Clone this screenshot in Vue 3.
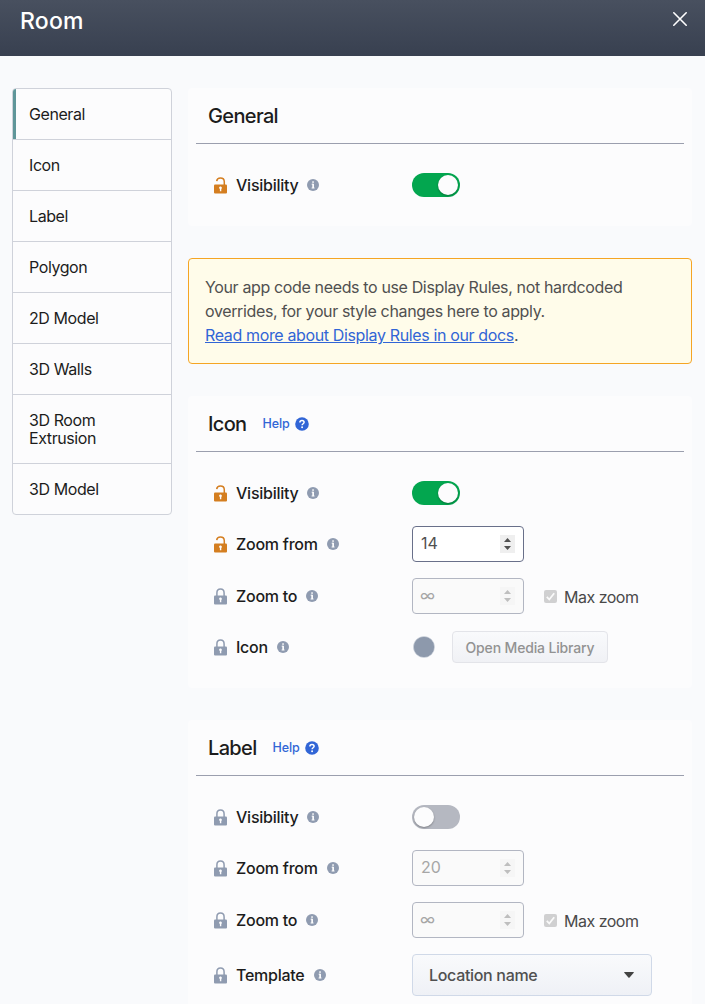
<script setup>
const navItems = ['General', 'Icon', 'Label', 'Polygon', '2D Model', '3D Walls', '3D Room Extrusion', '3D Model']

const general = {
  title: 'General',
  rows: [{ label: 'Visibility', open: true, type: 'toggle', on: true }],
}

const sections = [
  {
    title: 'Icon',
    rows: [
      { label: 'Visibility', open: true, type: 'toggle', on: true },
      { label: 'Zoom from', open: true, type: 'number', value: '14' },
      { label: 'Zoom to', type: 'number', value: '∞', disabled: true, max: true },
      { label: 'Icon', type: 'media' },
    ],
  },
  {
    title: 'Label',
    rows: [
      { label: 'Visibility', type: 'toggle', on: false },
      { label: 'Zoom from', type: 'number', value: '20', disabled: true },
      { label: 'Zoom to', type: 'number', value: '∞', disabled: true, max: true },
      { label: 'Template', type: 'select', value: 'Location name' },
    ],
  },
]

const blocks = [general, { alert: true }, ...sections]
</script>

<template>
  <div class="page">
    <header class="topbar">
      <h1>Room</h1>
      <svg class="close" width="16" height="16" viewBox="0 0 16 16">
        <path d="M1.8 1.8 14.2 14.2M14.2 1.8 1.8 14.2" stroke="#fff" stroke-width="1.6" stroke-linecap="round" />
      </svg>
    </header>

    <div class="layout">
      <nav class="nav">
        <a v-for="(item, i) in navItems" :key="item" :class="['nav-item', { active: i === 0 }]"><span>{{ item }}</span></a>
      </nav>

      <main class="content">
        <template v-for="(block, i) in blocks" :key="i">
          <div v-if="block.alert" class="alert">
            <div>Your app code needs to use Display Rules, not hardcoded</div>
            <div>overrides, for your style changes here to apply.</div>
            <div><a>Read more about Display Rules in our docs</a>.</div>
          </div>

          <section v-else class="card">
            <div class="card-head">
              <h2>{{ block.title }}</h2>
              <a v-if="i > 0" class="help">
                <span>Help</span>
                <svg width="14" height="14" viewBox="0 0 14 14">
                  <circle cx="7" cy="7" r="6.8" fill="#3165d6" />
                  <path d="M4.9 5.5C4.9 4.2 5.8 3.5 7 3.5s2.1.7 2.1 1.8c0 1.5-2 1.4-2 3" fill="none" stroke="#fff" stroke-width="1.5" />
                  <circle cx="7.1" cy="10.3" r=".95" fill="#fff" />
                </svg>
              </a>
            </div>

            <div class="rows">
              <div v-for="row in block.rows" :key="row.label" class="row">
                <div class="label">
                  <svg :class="['lock', { open: row.open }]" width="14" height="18" viewBox="0 0 14 18">
                    <path v-if="row.open" d="M2.7 5.2C3 3.2 4.5 2.1 6.4 2.1c2.3 0 3.9 1.5 3.9 3.7V10" fill="none" stroke="currentColor" stroke-width="1.5" />
                    <path v-else d="M2.9 10V6c0-2.3 1.5-3.9 3.6-3.9s3.6 1.6 3.6 3.9v4" fill="none" stroke="currentColor" stroke-width="1.5" />
                    <rect y="8.6" width="13" height="9" rx="1.1" fill="currentColor" />
                    <path d="M5.1 12a1.4 1.4 0 1 1 2.2 1v2.3H5.9V13a1.4 1.4 0 0 1-.8-1z" fill="#fcfcfd" />
                  </svg>
                  <span class="label-text">{{ row.label }}</span>
                  <svg class="info" width="12" height="12" viewBox="0 0 12 12">
                    <circle cx="6" cy="6" r="6" fill="#8f9bb0" />
                    <rect x="5.2" y="2.3" width="1.7" height="1.5" rx=".4" fill="#fff" />
                    <path d="M4.7 5.2h1.4v3.6M4.6 9h2.9" fill="none" stroke="#fff" stroke-width="1" />
                    <path d="M6.2 4.8V9" stroke="#fff" stroke-width="1.4" />
                  </svg>
                </div>

                <div v-if="row.type === 'toggle'" :class="['toggle', { on: row.on }]"><i></i></div>

                <template v-else-if="row.type === 'number'">
                  <div :class="['number', { disabled: row.disabled }]">
                    <span :class="{ inf: row.value === '∞' }">{{ row.value }}</span>
                    <svg class="spin" width="15" height="18" viewBox="0 0 15 18">
                      <rect width="15" height="18" fill="#efefef" />
                      <path d="M4 7 7.5 3 11 7zM4 11 7.5 15 11 11z" fill="#505050" />
                    </svg>
                  </div>
                  <div v-if="row.max" class="max">
                    <svg width="13" height="13" viewBox="0 0 13 13">
                      <rect width="13" height="13" rx="2" fill="#d0d0d1" />
                      <path d="m2.8 6.9 2.5 2.6 4.9-6.3" fill="none" stroke="#fafafa" stroke-width="1.8" />
                    </svg>
                    <span>Max zoom</span>
                  </div>
                </template>

                <template v-else-if="row.type === 'media'">
                  <svg class="dot" width="22" height="22" viewBox="0 0 22 22">
                    <circle cx="11" cy="11" r="10.6" fill="#8d99ac" stroke="#d5dae2" stroke-width=".6" />
                  </svg>
                  <button class="media" disabled>Open Media Library</button>
                </template>

                <div v-else class="select">
                  <span>{{ row.value }}</span>
                  <svg width="10" height="6" viewBox="0 0 10 6"><path d="M.7 0h8.6q.9 0 .4.7L5.6 5.5q-.6.7-1.2 0L.3.7Q-.2 0 .7 0z" fill="#434343" /></svg>
                </div>
              </div>
            </div>
          </section>
        </template>
      </main>
    </div>
  </div>
</template>

<style>
body {
  margin: 0;
  overflow: hidden;
}
</style>

<style scoped>
.page {
  height: 1004px;
  overflow: hidden;
  background: #f9fafc;
  color: #1c1c1c;
  font-family: Inter, "Liberation Sans", sans-serif;
  font-size: 16px;
}
.topbar {
  box-sizing: border-box;
  height: 56px;
  padding: 6px 17px 0 20px;
  display: flex;
  justify-content: space-between;
  background: linear-gradient(#48505f, #384050);
}
h1 {
  margin: 0;
  font-size: 23px;
  line-height: 30px;
  font-weight: 500;
  letter-spacing: 0.2px;
  color: #fff;
}
.close {
  margin-top: 5px;
}
.layout {
  display: flex;
  align-items: flex-start;
  gap: 16px;
  padding: 32px 13px 0 12px;
}
.nav {
  box-sizing: border-box;
  width: 160px;
  flex: none;
  border: 1px solid #cfd2da;
  border-radius: 4px;
  overflow: hidden;
  background: #fcfcfd;
}
.nav-item {
  display: block;
  padding: 16px;
  line-height: 18px;
  letter-spacing: -0.42px;
}
.nav-item + .nav-item {
  border-top: 1px solid #cfd2da;
}
.nav-item span {
  display: block;
  width: 90px;
}
.nav-item.active {
  box-shadow: inset 3px 0 #5f9699;
}
.content {
  width: 504px;
  display: flex;
  flex-direction: column;
  gap: 32px;
}
.card {
  border-radius: 4px;
  background: #fcfcfd;
}
.card-head {
  box-sizing: border-box;
  height: 56px;
  margin: 0 8px;
  padding: 0 12px;
  display: flex;
  align-items: center;
  gap: 16px;
  border-bottom: 1px solid #9b9fae;
}
h2 {
  margin: 1px 0 0;
  font-size: 20px;
  line-height: 24px;
  font-weight: 500;
  letter-spacing: -0.65px;
}
.help {
  display: flex;
  align-items: center;
  gap: 5px;
  color: #3165d6;
  font-size: 12.5px;
  font-weight: 500;
  letter-spacing: -0.1px;
}
.rows {
  display: flex;
  flex-direction: column;
  gap: 16px;
  padding: 24px 16px 24px 26px;
}
.row {
  min-height: 34px;
  display: flex;
  align-items: center;
}
.label {
  width: 198px;
  flex: none;
  display: flex;
  align-items: center;
}
.lock {
  margin-right: 8px;
  color: #8f9bb0;
}
.lock.open {
  color: #d47e20;
}
.label-text {
  line-height: 20px;
  font-weight: 500;
  letter-spacing: -0.25px;
}
.info {
  margin: -1px 0 0 9px;
}
.toggle {
  width: 48px;
  height: 24px;
  border-radius: 12px;
  background: #b5b8c1;
}
.toggle i {
  display: block;
  width: 20px;
  height: 20px;
  margin: 2px;
  border-radius: 50%;
  background: #fcfcfd;
  box-shadow: 0 1px 2px rgba(0, 0, 0, 0.3);
}
.toggle.on {
  display: flex;
  justify-content: flex-end;
  background: #03a64f;
}
.number {
  box-sizing: border-box;
  width: 112px;
  height: 36px;
  padding: 0 8px;
  display: flex;
  align-items: center;
  justify-content: space-between;
  border: 1px solid #69708a;
  border-radius: 4px;
  background: #fff;
  color: #505050;
}
.number span {
  margin-top: -2px;
}
.number .inf {
  margin-left: -1px;
}
.number.disabled {
  border-color: #b2b6c2;
  background: #fafafa;
  color: #a6a6a6;
}
.disabled .spin {
  opacity: 0.35;
}
.max {
  margin-left: 20px;
  display: flex;
  align-items: center;
  gap: 7px;
  color: #494949;
  letter-spacing: -0.5px;
}
.max span {
  margin-top: 2px;
}
.dot {
  margin: -1px 17px 0 1px;
}
.media {
  box-sizing: border-box;
  width: 156px;
  height: 32px;
  padding: 1px 0 0;
  border: 1px solid #e3e4e9;
  border-radius: 4px;
  background: linear-gradient(#f9fafc, #f0f1f5);
  color: #929292;
  font: 500 14px Inter, "Liberation Sans", sans-serif;
  letter-spacing: -0.15px;
  white-space: nowrap;
}
.select {
  box-sizing: border-box;
  width: 240px;
  height: 42px;
  padding: 0 17px 0 16px;
  display: flex;
  align-items: center;
  justify-content: space-between;
  border: 1px solid #d0d9e8;
  border-radius: 4px;
  background: linear-gradient(#f9fafc, #eff1f6);
  color: #505050;
  font-weight: 500;
  letter-spacing: -0.32px;
}
.alert {
  padding: 16px;
  border: 1px solid #f5a524;
  border-radius: 4px;
  background: #fffcea;
  color: #505050;
  line-height: 24px;
  letter-spacing: -0.36px;
  white-space: nowrap;
}
.alert a {
  color: #3165d6;
  text-decoration: underline;
}
</style>
